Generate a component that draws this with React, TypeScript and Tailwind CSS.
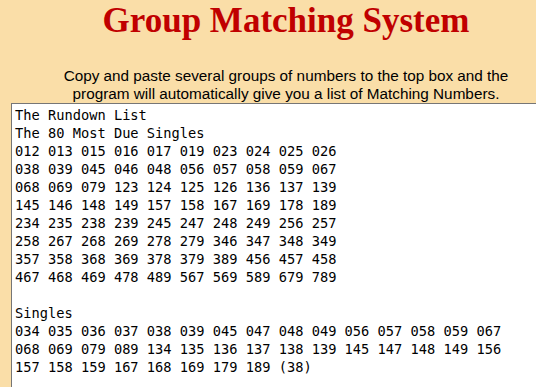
const rundown = [
  "The Rundown List",
  "The 80 Most Due Singles",
  "012 013 015 016 017 019 023 024 025 026",
  "038 039 045 046 048 056 057 058 059 067",
  "068 069 079 123 124 125 126 136 137 139",
  "145 146 148 149 157 158 167 169 178 189",
  "234 235 238 239 245 247 248 249 256 257",
  "258 267 268 269 278 279 346 347 348 349",
  "357 358 368 369 378 379 389 456 457 458",
  "467 468 469 478 489 567 569 589 679 789",
  "",
  "Singles",
  "034 035 036 037 038 039 045 047 048 049 056 057 058 059 067",
  "068 069 079 089 134 135 136 137 138 139 145 147 148 149 156",
  "157 158 159 167 168 169 179 189 (38)",
];

const App = () => {
  return (
    <div className="w-[536px] h-[387px] overflow-hidden bg-[#fadea8]">
      <div className="w-[572px]">
        {/* Heading */}
        <h1 className="pt-[1px] text-center text-[35px] leading-[40px] font-bold text-[#c00000] font-['Liberation_Serif','Times_New_Roman',serif]">
          Group Matching System
        </h1>

        {/* Intro */}
        <p className="mt-[26px] text-center text-[15.3px] leading-[17.5px] text-black font-['Liberation_Sans',Arial,sans-serif]">
          Copy and paste several groups of numbers to the top box and the
          <br />
          program will automatically give you a list of Matching Numbers.
        </p>
      </div>

      {/* Output box */}
      <div className="ml-[11px] mt-[1px] w-[600px] h-[400px] bg-white border border-[#767676] px-[3px] pt-[2px]">
        <pre className="text-[13.7px] leading-[18px] text-black font-['DejaVu_Sans_Mono','Liberation_Mono',monospace]">
          {rundown.join("\n")}
        </pre>
      </div>
    </div>
  );
};

export default App;
